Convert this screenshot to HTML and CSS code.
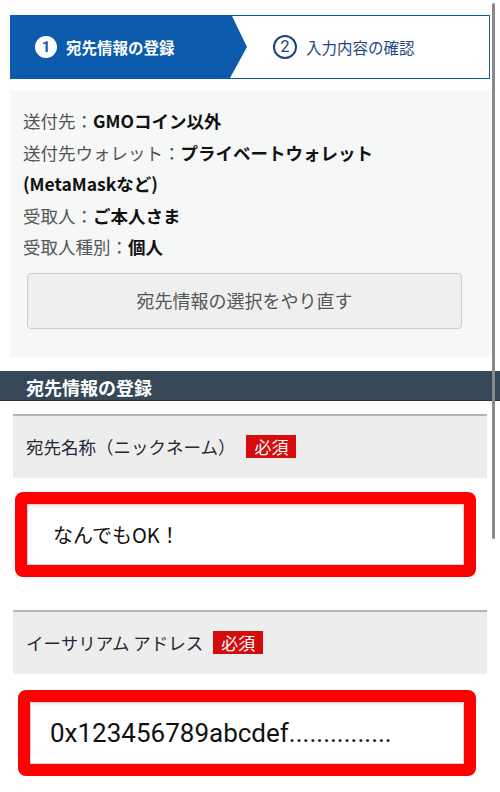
FILE: index.html
```html
<!DOCTYPE html>
<html lang="ja">
<head>
    <meta charset="UTF-8">
    <title>宛先情報の登録</title>
    <link rel="stylesheet" href="styles.css">
</head>
<body>
    <div class="container">
        <!-- ステップ表示 -->
        <ol class="steps">
            <li class="step current"><span class="num">1</span>宛先情報の登録</li>
            <li class="step"><span class="num">2</span>入力内容の確認</li>
        </ol>

        <!-- 選択済みの宛先情報 -->
        <div class="summary">
            <p><span class="key">送付先：</span><b>GMOコイン以外</b></p>
            <p><span class="key">送付先ウォレット：</span><b>プライベートウォレット<br>(MetaMaskなど)</b></p>
            <p><span class="key">受取人：</span><b>ご本人さま</b></p>
            <p><span class="key">受取人種別：</span><b>個人</b></p>
            <a class="redo-btn" href="#">宛先情報の選択をやり直す</a>
        </div>
    </div>

    <h2 class="section-title">宛先情報の登録</h2>

    <div class="form">
        <div class="field-label">宛先名称（ニックネーム）<span class="badge wide">必須</span></div>
        <div class="highlight">
            <div class="input-box">なんでもOK！</div>
        </div>

        <div class="field-label next">イーサリアム アドレス<span class="badge">必須</span></div>
        <div class="highlight addr">
            <div class="input-box mono">0x123456789abcdef...............</div>
        </div>
    </div>

    <div class="scrollbar"></div>
</body>
</html>
```

FILE: styles.css
```css
/* 基本 */
* {
    box-sizing: border-box;
    margin: 0;
    padding: 0;
}

body {
    font-family: "Noto Sans CJK JP", "Noto Sans", sans-serif;
    background: #fff;
    color: #111;
    width: 500px;
    height: 792px;
    overflow: hidden;
    position: relative;
}

.container {
    padding: 15px 10px 0;
}

/* ステップ */
.steps {
    list-style: none;
    display: flex;
    height: 64px;
    border: 1px solid #0c5bad;
}

.step {
    display: flex;
    align-items: center;
    font-size: 15.5px;
    color: #23497e;
    padding-left: 26px;
}

.step.current {
    width: 236px;
    background: #0c5bad;
    color: #fff;
    font-weight: bold;
    padding-left: 24px;
    clip-path: polygon(0 0, 221px 0, 100% 50%, 219px 100%, 0 100%);
}

.num {
    width: 24px;
    height: 24px;
    border-radius: 50%;
    border: 2px solid #1d4479;
    display: flex;
    align-items: center;
    justify-content: center;
    font-size: 16px;
    line-height: 1;
    margin-right: 9px;
    color: #1d4479;
    font-family: "Roboto", sans-serif;
}

.current .num {
    width: 22px;
    height: 22px;
    background: #fff;
    border: none;
    color: #0c5bad;
    font-size: 15px;
}

/* 宛先情報 */
.summary {
    margin-top: 11px;
    background: #f6f7f7;
    padding: 15px 13px 28px;
    font-size: 17.5px;
    line-height: 31.6px;
}

.summary .key {
    color: #555;
}

.summary b {
    color: #111;
}

.redo-btn {
    display: flex;
    align-items: center;
    justify-content: center;
    width: 435px;
    height: 56px;
    margin: 10px 0 0 4px;
    background: #efefef;
    border: 1px solid #ccc;
    border-radius: 4px;
    color: #555;
    font-size: 18px;
    text-decoration: none;
}

/* 見出し */
.section-title {
    margin-top: 14px;
    height: 30px;
    background: #364858;
    border-bottom: 1px solid #22313e;
    color: #fff;
    font-size: 18px;
    padding: 3px 0 0 26px;
    line-height: 26px;
}

/* フォーム */
.form {
    padding: 0 13px;
}

.field-label {
    margin-top: 13px;
    height: 64px;
    border-top: 2px solid #b5b5b5;
    background: #ededed;
    display: flex;
    align-items: center;
    padding-left: 13px;
    font-size: 17.5px;
    color: #1f2a36;
}

.field-label.next {
    margin-top: 33px;
}

.badge {
    background: #d60c0c;
    color: #fff;
    font-size: 17px;
    line-height: 23px;
    padding: 0 8px;
    margin-left: 10px;
}

.badge.wide {
    margin-left: 11px;
}

.highlight {
    margin: 14px 11px 0 2px;
    height: 85px;
    border: 12px solid #fe0000;
    border-radius: 8px;
}

.highlight.addr {
    margin: 16px 11px 0 5px;
    height: 86px;
}

.input-box {
    height: 100%;
    background: #fff;
    border: 1px solid #d4d4d4;
    box-shadow: inset 0 2px 3px rgba(0, 0, 0, 0.08);
    display: flex;
    align-items: center;
    padding-left: 25px;
    font-size: 20px;
    color: #111;
}

.input-box.mono {
    font-family: "Roboto", sans-serif;
    font-size: 26px;
    padding-left: 19px;
}

/* スクロールバー */
.scrollbar {
    position: absolute;
    top: 3px;
    left: 492px;
    width: 3px;
    height: 536px;
    border-radius: 2px;
    background: #8a8a8a;
}
```
